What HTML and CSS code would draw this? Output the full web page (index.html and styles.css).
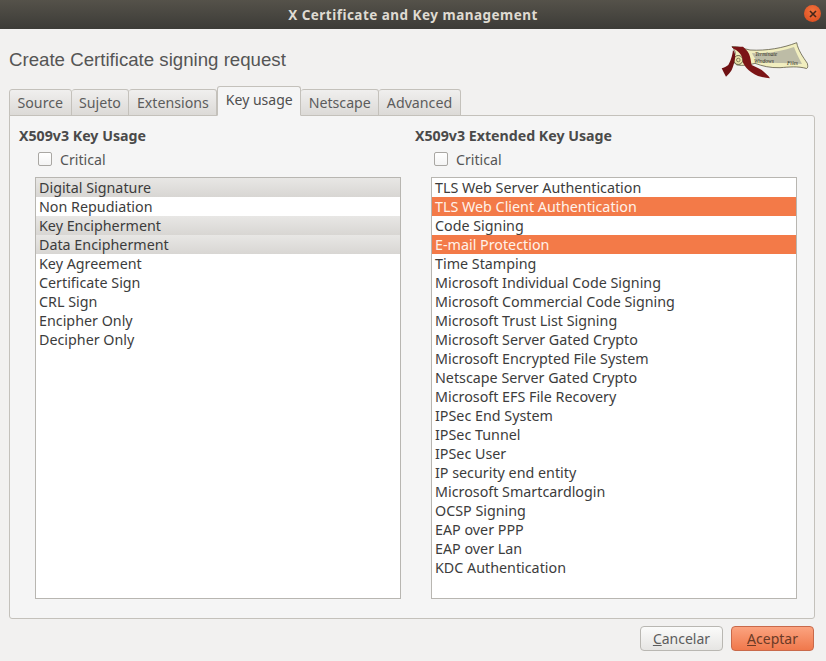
FILE: index.html
```html
<!DOCTYPE html>
<html>
    <head>
        <meta charset="UTF-8">
        <title>X Certificate and Key management</title>
        <link rel="stylesheet" href="styles.css">
    </head>
    <body>
        <div class="titlebar">
            <span class="titlebar-text">X Certificate and Key management</span>
            <span class="close-btn">
                <svg width="8" height="8" viewBox="0 0 8 8"><path d="M1 1L7 7M7 1L1 7" stroke="#43261a" stroke-width="1.6" fill="none"/></svg>
            </span>
        </div>
        <div class="content">
            <div class="header">
                <span class="header-title">Create Certificate signing request</span>
                <svg class="logo" width="90" height="38" viewBox="0 0 90 38">
                    <!-- scroll -->
                    <path d="M12 4.5C18 4 24 7 30 8C47 9 63 6 76.7 .7C78 8 83 15 87.3 21.3C88 24 88 26 86.5 26.5C78 24 69 25 60 25.7C50 26 42 24 35 21.3C30 23 22 24 17 23C13 21 12 16 15 13C16 10 14 7 12 4.5Z" fill="#f1eebf" stroke="#4a4632" stroke-width="0.7"/>
                    <path d="M32 11C48 12 62 9 74 5C76 11 79 16 82 22C70 21 52 22 37 19C35 16 33 14 32 11Z" fill="#bdbca6"/>
                    <circle cx="18.3" cy="18" r="4.5" fill="#e8e2a8" stroke="#4a4632" stroke-width="0.8"/>
                    <circle cx="18.3" cy="18" r="1.8" fill="none" stroke="#4a4632" stroke-width="0.6"/>
                    <!-- ribbon -->
                    <path d="M11.7 4.7L23 4.7C27 8 29 11 30 14.7C31 18 31 21 31.7 23C35 25 39 26 41.7 28C45 31 48 33 50 36.3C46 36 42 35 38 34C33 32 29 29 26.7 26.3C25 24 23.500 22 22.700 19.700C23 15 20 10 15 7.500C13 6.500 12 5.500 11.700 4.700Z" fill="#7c1416"/>
                    <path d="M13 8C15 10 15.500 13 15 16.300C14.500 20 13.500 24 11.700 28C10 31 8 33 6 34.700C4.500 32 3 29 1.700 26.300C4 25.500 6.500 24.500 8.300 23C10 20 11 17 11.700 14.700C12.500 12 12.800 10 13 8Z" fill="#6f1113"/>
                    <text class="logo-text" x="35" y="14">Terminate</text>
                    <text class="logo-text" x="34" y="21">Windows</text>
                    <text class="logo-text" x="67" y="23">Files</text>
                </svg>
            </div>
            <div class="tabs">
                <div class="tab">Source</div>
                <div class="tab">Sujeto</div>
                <div class="tab">Extensions</div>
                <div class="tab active">Key usage</div>
                <div class="tab">Netscape</div>
                <div class="tab">Advanced</div>
            </div>
            <div class="panel">
                <div class="col">
                    <div class="col-title">X509v3 Key Usage</div>
                    <label class="check"><span class="checkbox"></span>Critical</label>
                    <div class="list">
                        <div class="row grey">Digital Signature</div>
                        <div class="row">Non Repudiation</div>
                        <div class="row grey">Key Encipherment</div>
                        <div class="row grey">Data Encipherment</div>
                        <div class="row">Key Agreement</div>
                        <div class="row">Certificate Sign</div>
                        <div class="row">CRL Sign</div>
                        <div class="row">Encipher Only</div>
                        <div class="row">Decipher Only</div>
                    </div>
                </div>
                <div class="col">
                    <div class="col-title">X509v3 Extended Key Usage</div>
                    <label class="check"><span class="checkbox"></span>Critical</label>
                    <div class="list">
                        <div class="row">TLS Web Server Authentication</div>
                        <div class="row orange">TLS Web Client Authentication</div>
                        <div class="row">Code Signing</div>
                        <div class="row orange">E-mail Protection</div>
                        <div class="row">Time Stamping</div>
                        <div class="row">Microsoft Individual Code Signing</div>
                        <div class="row">Microsoft Commercial Code Signing</div>
                        <div class="row">Microsoft Trust List Signing</div>
                        <div class="row">Microsoft Server Gated Crypto</div>
                        <div class="row">Microsoft Encrypted File System</div>
                        <div class="row">Netscape Server Gated Crypto</div>
                        <div class="row">Microsoft EFS File Recovery</div>
                        <div class="row">IPSec End System</div>
                        <div class="row">IPSec Tunnel</div>
                        <div class="row">IPSec User</div>
                        <div class="row">IP security end entity</div>
                        <div class="row">Microsoft Smartcardlogin</div>
                        <div class="row">OCSP Signing</div>
                        <div class="row">EAP over PPP</div>
                        <div class="row">EAP over Lan</div>
                        <div class="row">KDC Authentication</div>
                    </div>
                </div>
            </div>
            <div class="buttons">
                <button class="btn"><u>C</u>ancelar</button>
                <button class="btn primary"><u>A</u>ceptar</button>
            </div>
        </div>
    </body>
</html>
```
FILE: styles.css
```css
html, body {
    margin: 0;
    height: 100%;
}

body {
    width: 826px;
    height: 661px;
    overflow: hidden;
    display: flex;
    flex-direction: column;
    background: #f2f1f0;
    color: #3c3c3c;
    font-family: "Noto Sans", sans-serif;
    font-size: 14px;
}

.titlebar {
    height: 29px;
    flex: none;
    display: flex;
    align-items: center;
    justify-content: center;
    position: relative;
    background: linear-gradient(#55524a, #3c3b37);
}

.titlebar-text {
    color: #dfdbd2;
    font-weight: bold;
    font-size: 13.5px;
    letter-spacing: 0.48px;
}

.close-btn {
    position: absolute;
    left: 804px;
    top: 5px;
    width: 17px;
    height: 17px;
    border-radius: 50%;
    background: radial-gradient(circle at 50% 35%, #f2733d, #d9481c);
    display: flex;
    align-items: center;
    justify-content: center;
}

.content {
    flex: 1;
    display: flex;
    flex-direction: column;
    padding: 0 12px 10px 9px;
    min-height: 0;
}

.header {
    height: 58px;
    flex: none;
    display: flex;
    align-items: center;
    justify-content: space-between;
}

.header-title {
    font-family: "Liberation Sans", sans-serif;
    font-size: 18.67px;
    color: #555;
    position: relative;
    top: 2px;
}

.logo {
    margin-right: 4px;
    margin-top: 5px;
}

.logo-text {
    font-family: "Liberation Serif", serif;
    font-style: italic;
    font-size: 5.5px;
    fill: #2c2a20;
}

.tabs {
    height: 29px;
    flex: none;
    display: flex;
    align-items: flex-end;
    margin-bottom: -1px;
    position: relative;
    z-index: 1;
}

.tab {
    height: 27px;
    padding: 0 7.5px;
    line-height: 25px;
    font-size: 14.2px;
    box-sizing: border-box;
    border: 1px solid #c4c1bb;
    border-left-width: 0;
    border-radius: 3px 3px 0 0;
    background: linear-gradient(#f0efee, #dcdad7);
    color: #5c5c5c;
}

.tab:first-child {
    border-left-width: 1px;
}

.tab.active {
    height: 30px;
    line-height: 26px;
    font-size: 14px;
    background: #f5f5f5;
    border-left-width: 1px;
    border-bottom: 1px solid #f5f5f5;
    color: #4f4f4f;
}

.panel {
    flex: 1;
    min-height: 0;
    display: flex;
    border: 1px solid #c4c1bb;
    border-radius: 0 3px 3px 3px;
    background: #f5f5f5;
    padding: 10px 16px 19px 9px;
    margin-right: -1px;
    gap: 14px;
}

.col {
    width: 382px;
    display: flex;
    flex-direction: column;
}

.col-title {
    font-weight: bold;
    font-size: 14.2px;
    line-height: 20px;
    color: #4a4a4a;
}

.check {
    display: flex;
    align-items: center;
    height: 26px;
    padding-left: 19px;
    color: #555;
    font-size: 14.2px;
    flex: none;
}

.checkbox {
    width: 12px;
    height: 12px;
    border: 1px solid #a9a7a3;
    border-radius: 2px;
    background: linear-gradient(#fff, #f4f4f4);
    margin-right: 8px;
}

.list {
    flex: 1;
    margin-left: 16px;
    margin-top: 5px;
    border: 1px solid #b8b6b1;
    background: #fff;
}

.row {
    height: 19px;
    line-height: 19px;
    padding-left: 3px;
    font-size: 14.3px;
    color: #3c3c3c;
    white-space: nowrap;
}

.row.grey {
    background: linear-gradient(#e8e7e5, #d8d6d3);
}

.row.orange {
    background: #f37a48;
    color: #fff2ea;
}

.buttons {
    height: 32px;
    flex: none;
    display: flex;
    justify-content: flex-end;
    align-items: flex-end;
    gap: 8px;
}

.btn {
    width: 83px;
    height: 25px;
    padding: 0;
    font: inherit;
    color: #5c5c5c;
    border: 1px solid #b9b7b2;
    border-radius: 4px;
    background: linear-gradient(#fbfbfa, #e6e5e3);
}

.btn.primary {
    color: #6b3a26;
    border-color: #c9694a;
    background: linear-gradient(#fba37f, #f0784c);
}
```
